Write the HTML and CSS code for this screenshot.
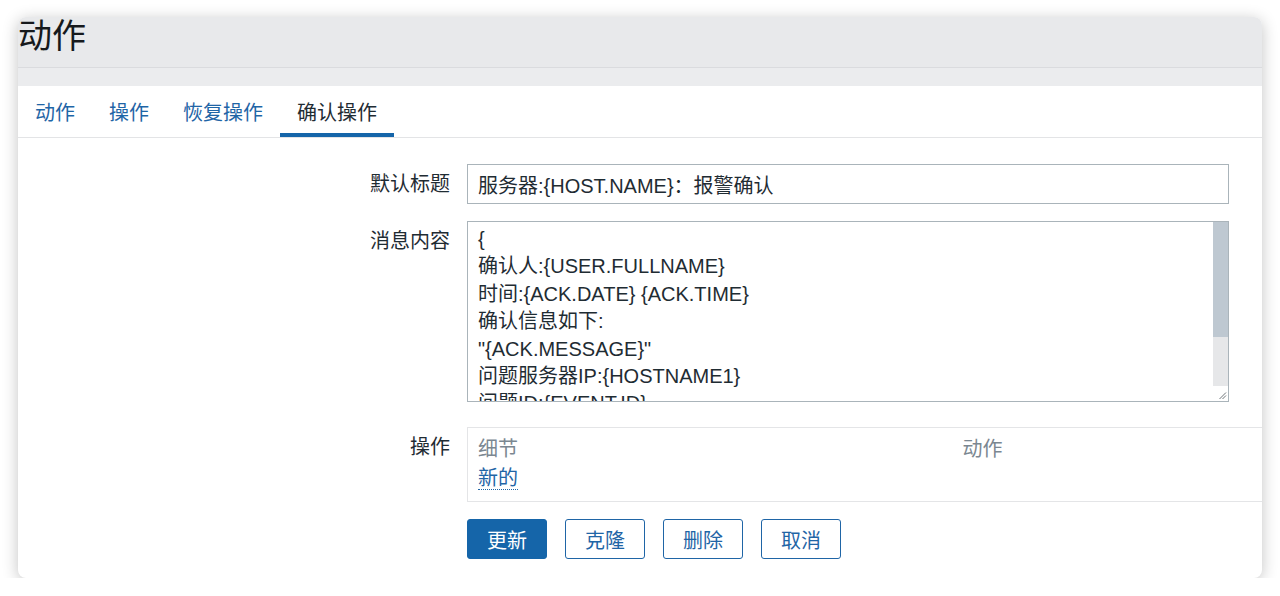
FILE: index.html
```html
<!DOCTYPE html>
<html lang="zh-CN">
<head>
<meta charset="utf-8">
<title>动作</title>
<link rel="stylesheet" href="styles.css">
</head>
<body>
<div class="card">
  <header class="page-header">
    <h1 class="page-title">动作</h1>
  </header>
  <div class="header-strip"></div>
  <nav class="tabs">
    <a class="tab">动作</a>
    <a class="tab">操作</a>
    <a class="tab">恢复操作</a>
    <a class="tab active">确认操作</a>
  </nav>
  <form class="form">
    <div class="row">
      <label class="label">默认标题</label>
      <div class="field"><input class="input" type="text" value="服务器:{HOST.NAME}：报警确认"></div>
    </div>
    <div class="row row-msg">
      <label class="label">消息内容</label>
      <div class="field textarea-box">
        <textarea class="textarea">{
确认人:{USER.FULLNAME}
时间:{ACK.DATE} {ACK.TIME}
确认信息如下:
"{ACK.MESSAGE}"
问题服务器IP:{HOSTNAME1}
问题ID:{EVENT.ID}
当前的问题是: {TRIGGER.NAME}
}</textarea>
        <div class="scrollbar">
          <div class="scroll-thumb"></div>
          <div class="scroll-track"></div>
          <div class="resizer">
            <svg width="15" height="15" viewBox="0 0 15 15"><path d="M13 6.5 L6.5 13 M13 9.5 L9.5 13" stroke="#6f7579" stroke-width="1" fill="none"/></svg>
          </div>
        </div>
      </div>
    </div>
    <div class="row">
      <label class="label">操作</label>
      <div class="field field-ops">
        <table class="ops">
          <thead>
            <tr><th class="col-detail">细节</th><th>动作</th></tr>
          </thead>
          <tbody>
            <tr><td colspan="2"><a class="link-new">新的</a></td></tr>
          </tbody>
        </table>
      </div>
    </div>
    <div class="row">
      <span class="label"></span>
      <div class="buttons">
        <button type="button" class="btn btn-primary">更新</button>
        <button type="button" class="btn">克隆</button>
        <button type="button" class="btn">删除</button>
        <button type="button" class="btn">取消</button>
      </div>
    </div>
  </form>
</div>
</body>
</html>
```
FILE: styles.css
```css
* { box-sizing: border-box; }

html, body {
  margin: 0;
  background: #ffffff;
}

body {
  font-family: "Liberation Sans", "Noto Sans CJK SC", sans-serif;
  color: #1f2c33;
  padding: 17px 18px 0;
}

.card {
  width: 1244px;
  height: 561px;
  background: #ffffff;
  border-radius: 8px;
  box-shadow: 0 3px 16px rgba(0, 0, 0, 0.24);
  overflow: hidden;
}

.page-header {
  height: 51px;
  background: #e8e9eb;
  border-bottom: 1px solid #dadbde;
}

.page-title {
  margin: 0;
  font-size: 34px;
  font-weight: 400;
  line-height: 39px;
  color: #16191c;
  white-space: nowrap;
}

.header-strip {
  height: 18px;
  background: #ebecee;
}

.tabs {
  display: flex;
  height: 52px;
  border-bottom: 1px solid #e3e4e6;
}

.tab {
  display: flex;
  align-items: center;
  padding: 0 17px;
  font-size: 20px;
  color: #1f65a6;
  cursor: pointer;
}

.tab.active {
  color: #1f2c33;
  box-shadow: inset 0 -4px 0 #1565a9;
}

.form {
  display: flex;
  flex-direction: column;
  gap: 17px;
  padding-top: 26px;
}

.row {
  display: grid;
  grid-template-columns: 432px 762px;
  column-gap: 17px;
}

.row-msg {
  margin-bottom: 8px;
}

.label {
  text-align: right;
  font-size: 20px;
  line-height: 40px;
  color: #1f2c33;
}

.input {
  display: block;
  width: 762px;
  height: 40px;
  border: 1px solid #aab4ba;
  border-radius: 0;
  padding: 0 10px;
  font-family: inherit;
  font-size: 20px;
  color: #1f2c33;
  background: #ffffff;
  outline: none;
}

.textarea-box {
  display: flex;
  width: 762px;
  height: 181px;
  border: 1px solid #aab4ba;
  background: #ffffff;
}

.textarea {
  flex: 1;
  min-width: 0;
  height: 100%;
  border: none;
  border-radius: 0;
  padding: 4px 10px;
  font-family: inherit;
  font-size: 20px;
  line-height: 27.4px;
  color: #1f2c33;
  background: #ffffff;
  resize: none;
  outline: none;
  overflow: hidden;
}

.scrollbar {
  display: flex;
  flex-direction: column;
  width: 15px;
  flex: none;
}

.scroll-thumb {
  height: 115px;
  background: #bec8d1;
}

.scroll-track {
  flex: 1;
  background: #e6e7e9;
}

.resizer {
  height: 15px;
  background: #ffffff;
}

.resizer svg {
  display: block;
}

.field-ops {
  width: 800px;
}

.ops {
  width: 800px;
  border: 1px solid #e4e5e7;
  border-collapse: collapse;
  font-size: 20px;
}

.ops th {
  text-align: left;
  font-weight: 400;
  color: #7b8791;
  line-height: 26px;
  padding: 8px 10px 0;
}

.ops th.col-detail {
  width: 485px;
}

.ops td {
  line-height: 26px;
  padding: 3px 10px 10px;
}

.link-new {
  color: #1f65a6;
  border-bottom: 1px dotted #1f65a6;
  cursor: pointer;
}

.buttons {
  display: flex;
  gap: 18px;
}

.btn {
  width: 80px;
  height: 40px;
  border: 1px solid #1f65a6;
  border-radius: 3px;
  background: #ffffff;
  color: #1f65a6;
  font-family: inherit;
  font-size: 20px;
  padding: 0;
  cursor: pointer;
}

.btn-primary {
  background: #1565a9;
  border-color: #1565a9;
  color: #ffffff;
}
```
